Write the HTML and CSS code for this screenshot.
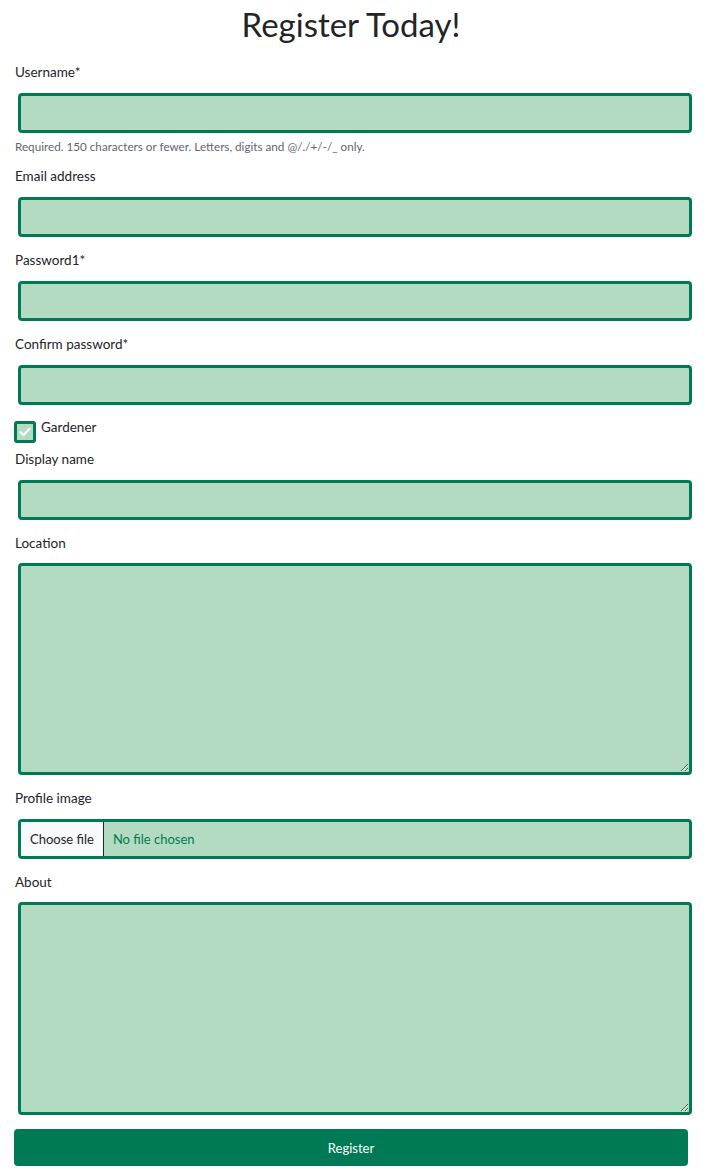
FILE: index.html
```html
<!DOCTYPE html>
<html lang="en">
<head>
<meta charset="utf-8">
<title>Register Today!</title>
<link rel="stylesheet" href="styles.css">
</head>
<body>
<main class="page">
  <h1 class="title">Register Today!</h1>
  <form class="form">
    <div class="field">
      <label class="label" for="username">Username*</label>
      <input class="input" id="username" type="text">
      <div class="help">Required. 150 characters or fewer. Letters, digits and @/./+/-/_ only.</div>
    </div>
    <div class="field">
      <label class="label" for="email">Email address</label>
      <input class="input" id="email" type="email">
    </div>
    <div class="field">
      <label class="label" for="password1">Password1*</label>
      <input class="input" id="password1" type="password">
    </div>
    <div class="field">
      <label class="label" for="password2">Confirm password*</label>
      <input class="input" id="password2" type="password">
    </div>
    <div class="check-row">
      <span class="check">
        <svg width="12" height="10" viewBox="0 0 12 10"><path d="M1.5 5.2 L4.6 8 L10.5 1.8" fill="none" stroke="#ffffff" stroke-width="2.2" stroke-linecap="round" stroke-linejoin="round"/></svg>
      </span>
      <span class="check-label">Gardener</span>
    </div>
    <div class="field field-tight">
      <label class="label" for="display">Display name</label>
      <input class="input" id="display" type="text">
    </div>
    <div class="field">
      <label class="label" for="location">Location</label>
      <textarea class="input area" id="location"></textarea>
    </div>
    <div class="field">
      <label class="label" for="image">Profile image</label>
      <div class="input file">
        <span class="file-btn">Choose file</span>
        <span class="file-text">No file chosen</span>
      </div>
    </div>
    <div class="field">
      <label class="label" for="about">About</label>
      <textarea class="input area area-tall" id="about"></textarea>
    </div>
    <button class="submit" type="button">Register</button>
  </form>
</main>
</body>
</html>
```
FILE: styles.css
```css
* { box-sizing: border-box; }
html, body { margin: 0; padding: 0; background: #ffffff; }
body {
  font-family: Lato, "Open Sans", "Liberation Sans", sans-serif;
  color: #212529;
}
.page {
  width: 688px;
  padding: 0 0 0 14px;
}
.title {
  margin: 0 0 14px;
  font-size: 33px;
  font-weight: 400;
  line-height: 48px;
  text-align: center;
  color: #212529;
}
.form { display: block; }
.field { margin-top: 13px; }
.field:first-child { margin-top: 0; }
.field-tight { margin-top: 6px; }
.label {
  display: block;
  font-size: 13.5px;
  line-height: 20px;
  padding-left: 1px;
  color: #212529;
}
.input {
  display: block;
  width: 674px;
  height: 40px;
  margin: 11px 0 0 4px;
  border: 3px solid #007a55;
  border-radius: 4px;
  background: #b3dbc2;
  font-family: inherit;
  font-size: 14px;
  outline: none;
}
.area {
  height: 212px;
  margin-top: 10px;
  resize: vertical;
}
.area-tall { height: 213px; }
.help {
  margin-top: 5px;
  margin-bottom: -1px;
  padding-left: 1px;
  font-size: 11.7px;
  line-height: 16px;
  color: #5f666d;
}
.check-row {
  display: flex;
  align-items: flex-start;
  gap: 5px;
  margin-top: 16px;
}
.check {
  display: flex;
  align-items: center;
  justify-content: center;
  width: 22px;
  height: 22px;
  border: 3px solid #007a55;
  border-radius: 3px;
  background: #b3dbc2;
}
.check-label {
  font-size: 13.5px;
  line-height: 12px;
}
.file {
  display: flex;
  align-items: stretch;
  padding: 0;
}
.file-btn {
  display: flex;
  align-items: center;
  padding: 0 9px;
  background: #f8f9fa;
  border-right: 1px solid #212529;
  font-size: 13px;
  color: #212529;
}
.file-text {
  display: flex;
  align-items: center;
  padding-left: 9px;
  font-size: 13px;
  color: #007a55;
}
.submit {
  display: block;
  width: 674px;
  height: 37px;
  margin-top: 14px;
  border: 0;
  border-radius: 4px;
  background: #007a55;
  color: #ffffff;
  font-family: inherit;
  font-size: 13px;
}
```
